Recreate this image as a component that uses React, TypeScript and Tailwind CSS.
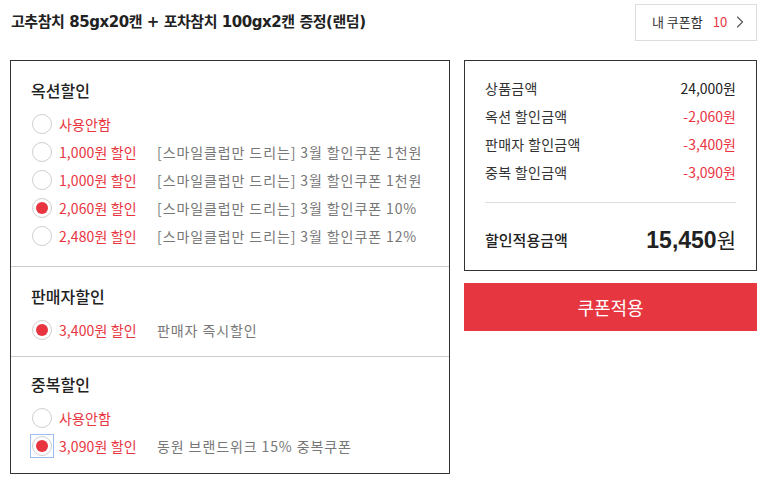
import { ChevronRight } from 'lucide-react';

type Row = { amount: string; desc?: string; checked?: boolean; focus?: boolean };

const sections: { title: string; rows: Row[] }[] = [
    {
        title: '옥션할인',
        rows: [
            { amount: '사용안함' },
            { amount: '1,000원 할인', desc: '[스마일클럽만 드리는] 3월 할인쿠폰 1천원' },
            { amount: '1,000원 할인', desc: '[스마일클럽만 드리는] 3월 할인쿠폰 1천원' },
            { amount: '2,060원 할인', desc: '[스마일클럽만 드리는] 3월 할인쿠폰 10%', checked: true },
            { amount: '2,480원 할인', desc: '[스마일클럽만 드리는] 3월 할인쿠폰 12%' },
        ],
    },
    {
        title: '판매자할인',
        rows: [{ amount: '3,400원 할인', desc: '판매자 즉시할인', checked: true }],
    },
    {
        title: '중복할인',
        rows: [
            { amount: '사용안함' },
            { amount: '3,090원 할인', desc: '동원 브랜드위크 15% 중복쿠폰', checked: true, focus: true },
        ],
    },
];

const sectionPad = ['pt-[18px] pb-[16px]', 'pt-[18px] pb-[12px]', 'pt-[16px] pb-[14px]'];

const summary = [
    { label: '상품금액', value: '24,000원', red: false },
    { label: '옥션 할인금액', value: '-2,060원', red: true },
    { label: '판매자 할인금액', value: '-3,400원', red: true },
    { label: '중복 할인금액', value: '-3,090원', red: true },
];

const Radio = ({ checked, focus }: { checked?: boolean; focus?: boolean }) => (
    <span className={`flex items-center justify-center w-[22px] h-[22px] ${focus ? 'outline outline-1 outline-[#9cc0ee]' : ''}`}>
        <span className="flex items-center justify-center w-[20px] h-[20px] rounded-full border border-[#cfcfcf] bg-white">
            {checked && <span className="w-[12px] h-[12px] rounded-full bg-[#e8353f]" />}
        </span>
    </span>
);

export default function App() {
    return (
        <div className="w-[766px] h-[484px] bg-white text-[#222] font-['Noto_Sans_CJK_KR',sans-serif]">
            {/* header */}
            <div className="flex items-center justify-between pl-[11px] pr-[9px] pt-[3px] h-[41px]">
                <h1 className="text-[15px] font-bold tracking-[-0.45px] font-['DejaVu_Sans','Noto_Sans_CJK_KR',sans-serif] text-[#222]">
                    고추참치 85gx20캔 + 포차참치 100gx2캔 증정(랜덤)
                </h1>
                <button className="flex items-center w-[122px] h-[37px] border border-[#ddd] pl-[16px] text-[13px] text-[#333]">
                    <span>내 쿠폰함</span>
                    <span className="ml-[10px] text-[#e8353f]">10</span>
                    <ChevronRight size={20} strokeWidth={1.3} className="ml-[3px] text-[#555]" />
                </button>
            </div>

            <div className="flex gap-[14px] pl-[10px] pr-[9px] pt-[19px]">
                {/* coupon list */}
                <div className="w-[440px] h-[414px] border border-[#333] flex flex-col">
                    {sections.map((s, si) => (
                        <div key={si} className={`px-[20px] ${si > 0 ? 'border-t border-[#ccc]' : ''} ${sectionPad[si]}`}>
                            <h3 className="text-[16px] font-medium text-[#222] leading-[22px] mb-[9px]">{s.title}</h3>
                            <div className="flex flex-col">
                                {s.rows.map((r, ri) => (
                                    <div key={ri} className="flex items-center h-[28px] text-[14px]">
                                        <Radio checked={r.checked} focus={r.focus} />
                                        <span className="ml-[6px] w-[98px] text-[#e8353f] tracking-[0.1px]">{r.amount}</span>
                                        {r.desc && <span className="text-[#777] tracking-[0.9px]">{r.desc}</span>}
                                    </div>
                                ))}
                            </div>
                        </div>
                    ))}
                </div>

                {/* summary */}
                <div className="flex flex-col flex-1 gap-[12px]">
                    <div className="border border-[#333] h-[211px] px-[20px] pt-[13px]">
                        <div className="flex flex-col pb-[16px] border-b border-[#ddd]">
                            {summary.map((s, i) => (
                                <div key={i} className="flex justify-between items-center h-[28px] text-[14px]">
                                    <span className="text-[#333] tracking-[0.3px]">{s.label}</span>
                                    <span className={s.red ? 'text-[#e8353f]' : 'text-[#222]'}>{s.value}</span>
                                </div>
                            ))}
                        </div>
                        <div className="flex justify-between items-center h-[74px]">
                            <span className="text-[15px] font-medium text-[#222]">할인적용금액</span>
                            <span className="flex items-baseline text-[#222]">
                                <span className="text-[23px] font-bold font-['Liberation_Sans',sans-serif]">15,450</span>
                                <span className="text-[21px]">원</span>
                            </span>
                        </div>
                    </div>
                    <button className="h-[48px] bg-[#e6363f] text-white text-[18px]">쿠폰적용</button>
                </div>
            </div>
        </div>
    );
}
